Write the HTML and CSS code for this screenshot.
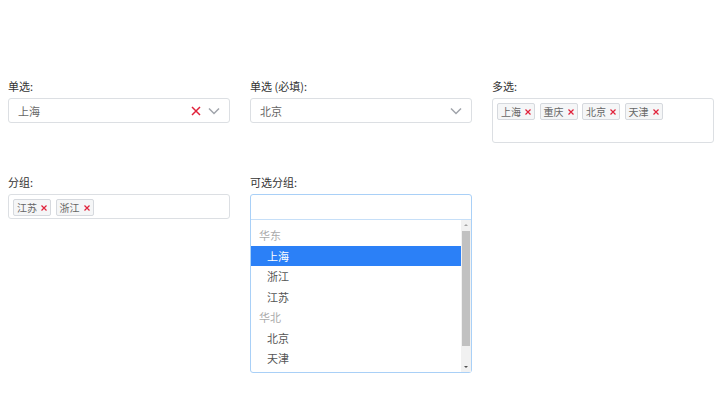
FILE: index.html
```html
<!DOCTYPE html>
<html lang="zh-CN">
<head>
    <meta charset="UTF-8">
    <title>Select 示例</title>
    <link rel="stylesheet" href="styles.css">
</head>
<body>
    <div class="form-grid">
        <div class="field">
            <label class="field-label">单选:</label>
            <div class="select">
                <span class="select-value">上海</span>
                <svg class="select-clear" width="10" height="10" viewBox="0 0 10 10"><path d="M1 1l8 8M9 1l-8 8" stroke="#e0213a" stroke-width="1.5"/></svg>
                <svg class="select-arrow" width="12" height="8" viewBox="0 0 12 8"><path d="M1 1.5l5 5 5-5" fill="none" stroke="#a0a4ab" stroke-width="1.5"/></svg>
            </div>
        </div>
        <div class="field">
            <label class="field-label">单选 (必填):</label>
            <div class="select">
                <span class="select-value">北京</span>
                <svg class="select-arrow" width="12" height="8" viewBox="0 0 12 8"><path d="M1 1.5l5 5 5-5" fill="none" stroke="#a0a4ab" stroke-width="1.5"/></svg>
            </div>
        </div>
        <div class="field">
            <label class="field-label">多选:</label>
            <div class="multi multi-tall">
                <span class="tag">上海<svg class="tag-x" width="6" height="6" viewBox="0 0 6 6"><path d="M0.5 0.5l5 5M5.5 0.5l-5 5" stroke="#e0213a" stroke-width="1.2"/></svg></span>
                <span class="tag">重庆<svg class="tag-x" width="6" height="6" viewBox="0 0 6 6"><path d="M0.5 0.5l5 5M5.5 0.5l-5 5" stroke="#e0213a" stroke-width="1.2"/></svg></span>
                <span class="tag">北京<svg class="tag-x" width="6" height="6" viewBox="0 0 6 6"><path d="M0.5 0.5l5 5M5.5 0.5l-5 5" stroke="#e0213a" stroke-width="1.2"/></svg></span>
                <span class="tag">天津<svg class="tag-x" width="6" height="6" viewBox="0 0 6 6"><path d="M0.5 0.5l5 5M5.5 0.5l-5 5" stroke="#e0213a" stroke-width="1.2"/></svg></span>
            </div>
        </div>

        <div class="field">
            <label class="field-label">分组:</label>
            <div class="multi">
                <span class="tag">江苏<svg class="tag-x" width="6" height="6" viewBox="0 0 6 6"><path d="M0.5 0.5l5 5M5.5 0.5l-5 5" stroke="#e0213a" stroke-width="1.2"/></svg></span>
                <span class="tag">浙江<svg class="tag-x" width="6" height="6" viewBox="0 0 6 6"><path d="M0.5 0.5l5 5M5.5 0.5l-5 5" stroke="#e0213a" stroke-width="1.2"/></svg></span>
            </div>
        </div>
        <div class="field">
            <label class="field-label">可选分组:</label>
            <div class="dropdown">
                <div class="search"></div>
                <div class="menu">
                    <ul class="options">
                        <li class="group">华东</li>
                        <li class="option active">上海</li>
                        <li class="option">浙江</li>
                        <li class="option">江苏</li>
                        <li class="group">华北</li>
                        <li class="option">北京</li>
                        <li class="option">天津</li>
                    </ul>
                    <div class="scrollbar">
                        <span class="scroll-up"></span>
                        <span class="scroll-thumb"></span>
                        <span class="scroll-down"></span>
                    </div>
                </div>
            </div>
        </div>
    </div>
</body>
</html>
```

FILE: styles.css
```css
/* Page */
body {
    margin: 0;
    padding: 78px 8px 0;
    font-family: "Noto Sans CJK SC", "Noto Sans", sans-serif;
    font-size: 11px;
    color: #333;
    background: #fff;
}

.form-grid {
    display: grid;
    grid-template-columns: repeat(3, 222px);
    column-gap: 20px;
    row-gap: 31px;
    align-items: start;
}

/* Field label */
.field-label {
    display: block;
    height: 16px;
    line-height: 16px;
    margin-bottom: 4px;
    color: #333;
}

/* Single select */
.select {
    display: flex;
    align-items: center;
    height: 25px;
    box-sizing: border-box;
    padding: 0 9px 0 9px;
    border: 1px solid #dcdfe3;
    border-radius: 3px;
    color: #666;
}

.select-value {
    flex: 1;
}

.select-clear {
    display: block;
    margin-right: 7px;
}

.select-arrow {
    display: block;
}

/* Multi select */
.multi {
    display: flex;
    flex-wrap: wrap;
    align-items: flex-start;
    gap: 4.5px;
    height: 25px;
    box-sizing: border-box;
    padding: 4px 4px;
    border: 1px solid #dcdfe3;
    border-radius: 3px;
}

.multi-tall {
    height: 45px;
}

.tag {
    display: inline-flex;
    align-items: center;
    height: 15px;
    padding: 0 3px;
    border: 1px solid #d6d9de;
    border-radius: 2px;
    background: #f5f6f7;
    font-size: 10px;
    color: #666;
    line-height: 13px;
}

.tag-x {
    display: block;
    margin-left: 4px;
}

/* Grouped dropdown, open */
.dropdown {
    border: 1px solid #a9d0f7;
    border-radius: 3px;
}

.search {
    height: 24px;
    border-bottom: 1px solid #c6dff8;
}

.menu {
    display: flex;
    height: 152px;
}

.options {
    flex: 1;
    list-style: none;
    margin: 0;
    padding: 5px 0 0;
}

.options li {
    height: 20.5px;
    line-height: 20.5px;
}

.group {
    padding-left: 8px;
    color: #aaa;
}

.option {
    padding-left: 16px;
    color: #555;
}

.option.active {
    background: #2b80f7;
    color: #fff;
}

.scrollbar {
    display: flex;
    flex-direction: column;
    width: 10px;
    background: #f1f1f1;
}

.scroll-up,
.scroll-down {
    height: 10px;
    position: relative;
}

.scroll-up::after,
.scroll-down::after {
    content: "";
    position: absolute;
    left: 3px;
    border-left: 2px solid transparent;
    border-right: 2px solid transparent;
}

.scroll-up::after {
    top: 4px;
    border-bottom: 2px solid #a3a3a3;
}

.scroll-down::after {
    top: 4px;
    border-top: 2px solid #505050;
}

.scroll-thumb {
    flex: 1;
    margin: 1px 1px 16px;
    background: #c1c1c1;
}
```
